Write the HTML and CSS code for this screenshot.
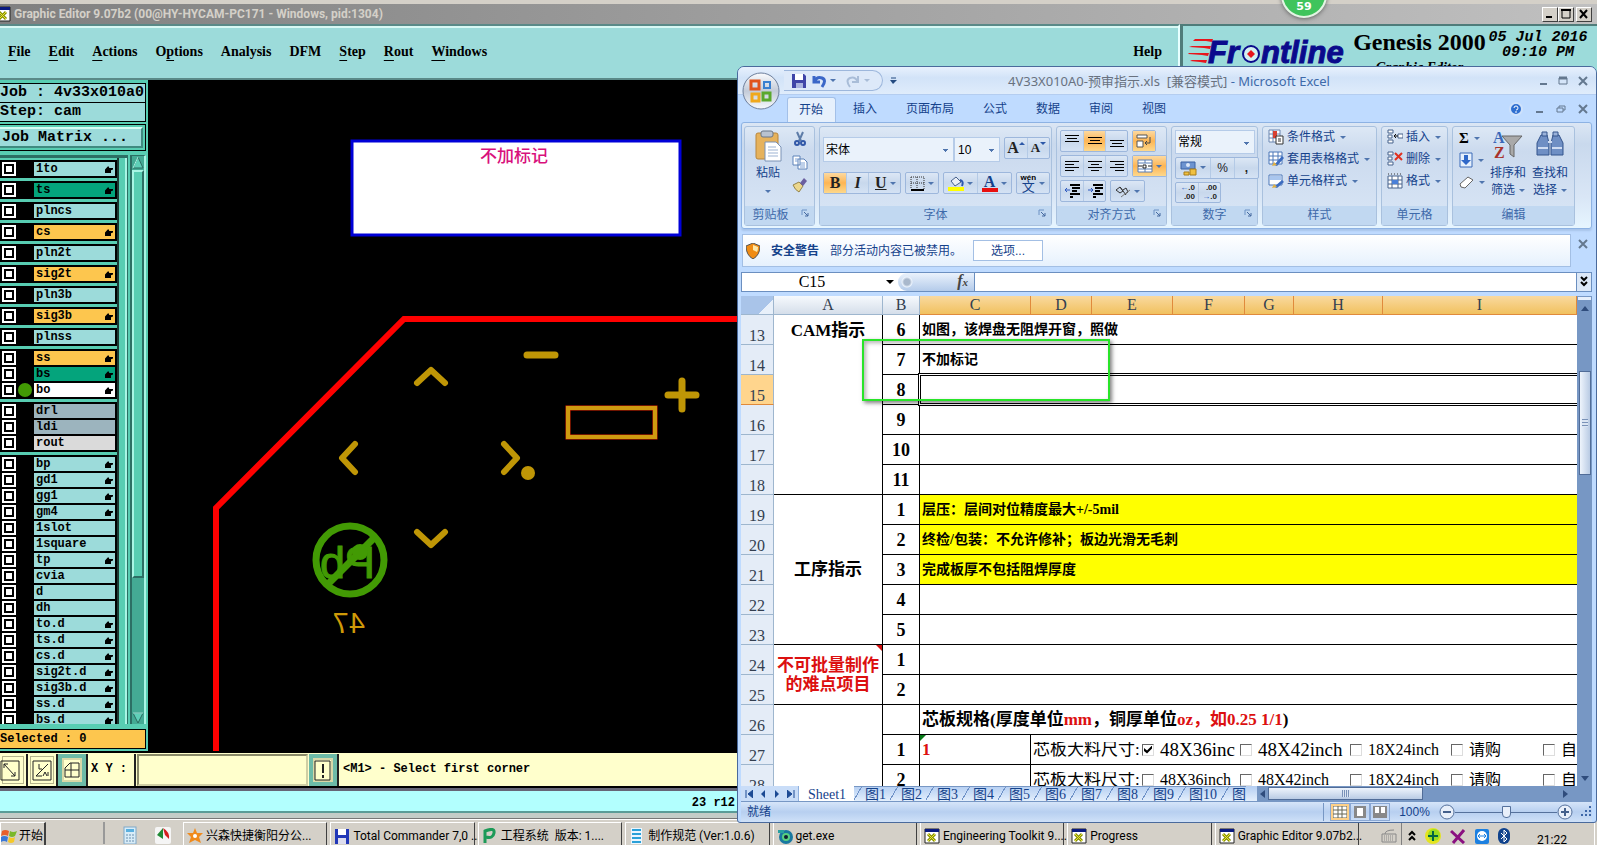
FILE: index.html
```html
<!DOCTYPE html>
<html lang="zh-CN">
<head>
  <meta charset="utf-8">
  <title>Graphic Editor</title>
  <link rel="stylesheet" href="styles.css">
</head>
<body>
<svg class="defs" aria-hidden="true">
  <symbol id="xwin" viewBox="0 0 16 16"><path d="M1 1h14v14H1z" fill="#fff" stroke="#222"/><path d="M1 1h14v3H1z" fill="#0a1a80"/><path d="M4 6l7 7M11 6l-7 7" stroke="#8a9000" stroke-width="3"/><path d="M4 6l7 7M11 6l-7 7" stroke="#e8e83c" stroke-width="1"/></symbol>
  <symbol id="launch" viewBox="0 0 8 8"><path d="M1 6V1h5" fill="none" stroke="#6d92c4"/><path d="M3 3l4 4M7 4v3H4" fill="none" stroke="#44699f"/></symbol>
</svg>
<div class="desktop">

  <div class="titlebar">
    <svg width="16" height="16"><use href="#xwin"/></svg>
    <span class="caption">Graphic Editor 9.07b2 (00@HY-HYCAM-PC171 - Windows, pid:1304)</span>
    <div class="winbtns">
      <button aria-label="Minimize"><svg width="12" height="10"><path d="M2 8h6" stroke="#000" stroke-width="2"/></svg></button>
      <button aria-label="Maximize"><svg width="12" height="10"><path d="M2 1v8h8V1z" fill="none" stroke="#000"/><path d="M1 1h10" stroke="#000" stroke-width="2"/></svg></button>
      <button class="close" aria-label="Close"><svg width="12" height="10"><path d="M2 1l7 8M9 1l-7 8" stroke="#000" stroke-width="2"/></svg></button>
    </div>
  </div>

  <div class="header">
    <div class="menubar">
      <a href="#"><u>F</u>ile</a>
      <a href="#"><u>E</u>dit</a>
      <a href="#"><u>A</u>ctions</a>
      <a href="#">O<u>p</u>tions</a>
      <a href="#">Analysis</a>
      <a href="#">DFM</a>
      <a href="#"><u>S</u>tep</a>
      <a href="#"><u>R</u>out</a>
      <a href="#"><u>W</u>indows</a>
      <a href="#" class="help">Help</a>
    </div>
    <div class="brand">
      <svg class="frontline" width="164" height="36">
        <path d="M8 3h18l-1 3-6-1-13 0zM5 10h19l-1 3-6-1-15-1zM2 17h20l-1 3-6-1-14-1zM5 24h15l-1 3-6-1-10-1z" fill="#e8141c"/>
        <g font-family="Liberation Sans, sans-serif" font-size="31" font-weight="bold" font-style="italic" fill="#0a0a8c" stroke="#0a0a8c"><text x="21" y="27">Fr</text><text x="74" y="27">ntline</text></g>
        <circle cx="64" cy="18" r="8" fill="#d4f0f0" stroke="#0a0a8c" stroke-width="2"/>
        <path d="M64 14l4 4-4 4-4-4z" fill="#e8141c"/>
      </svg>
      <div class="product">
        <div class="pname">Genesis 2000</div>
        <div class="psub">Graphic Editor</div>
      </div>
      <div class="clock">05 Jul 2016<br>09:10 PM</div>
    </div>
  </div>

  <div class="main">
    <div class="side">
      <div class="info">Job : 4v33x010a0</div>
      <div class="info">Step: cam</div>
      <div class="matrix"><button>Job Matrix ...</button></div>
      <div class="listbox">
        <div class="layers">
          <div class="grp"><label><input type="checkbox"><span class="name hand">1to</span></label></div>
          <div class="grp"><label><input type="checkbox"><span class="name green hand">ts</span></label></div>
          <div class="grp"><label><input type="checkbox"><span class="name">plncs</span></label></div>
          <div class="grp"><label><input type="checkbox"><span class="name orange hand">cs</span></label></div>
          <div class="grp"><label><input type="checkbox"><span class="name">pln2t</span></label></div>
          <div class="grp"><label><input type="checkbox"><span class="name orange hand">sig2t</span></label></div>
          <div class="grp"><label><input type="checkbox"><span class="name">pln3b</span></label></div>
          <div class="grp"><label><input type="checkbox"><span class="name orange hand">sig3b</span></label></div>
          <div class="grp"><label><input type="checkbox"><span class="name">plnss</span></label></div>
          <div class="grp">
            <label><input type="checkbox"><span class="name orange hand">ss</span></label>
            <label><input type="checkbox"><span class="name green hand">bs</span></label>
            <label class="active"><input type="checkbox"><span class="name white hand">bo</span></label>
          </div>
          <div class="grp">
            <label><input type="checkbox"><span class="name gray">drl</span></label>
            <label><input type="checkbox"><span class="name gray">ldi</span></label>
            <label><input type="checkbox"><span class="name silver">rout</span></label>
          </div>
          <div class="grp">
            <label><input type="checkbox"><span class="name hand">bp</span></label>
            <label><input type="checkbox"><span class="name hand">gd1</span></label>
            <label><input type="checkbox"><span class="name hand">gg1</span></label>
            <label><input type="checkbox"><span class="name hand">gm4</span></label>
            <label><input type="checkbox"><span class="name">1slot</span></label>
            <label><input type="checkbox"><span class="name">1square</span></label>
            <label><input type="checkbox"><span class="name hand">tp</span></label>
            <label><input type="checkbox"><span class="name">cvia</span></label>
            <label><input type="checkbox"><span class="name">d</span></label>
            <label><input type="checkbox"><span class="name">dh</span></label>
            <label><input type="checkbox"><span class="name hand">to.d</span></label>
            <label><input type="checkbox"><span class="name hand">ts.d</span></label>
            <label><input type="checkbox"><span class="name hand">cs.d</span></label>
            <label><input type="checkbox"><span class="name hand">sig2t.d</span></label>
            <label><input type="checkbox"><span class="name hand">sig3b.d</span></label>
            <label><input type="checkbox"><span class="name hand">ss.d</span></label>
            <label><input type="checkbox"><span class="name hand">bs.d</span></label>
          </div>
        </div>
        <div class="vbar">
          <svg width="12" height="14"><path d="M6 1L1 12h10z" fill="#5fd0b8" stroke="#2b6b60"/><path d="M6 1L1 12" stroke="#a8f5e4"/></svg>
          <div class="vthumb"></div>
          <div class="vtrack"></div>
          <svg width="12" height="12"><path d="M1 1h10L6 11z" fill="#5fd0b8" stroke="#2b6b60"/><path d="M1 1h10" stroke="#a8f5e4"/></svg>
        </div>
      </div>
      <div class="selected">Selected : 0</div>
    </div>
    <svg class="canvas">
      <rect x="204" y="61" width="328" height="94" fill="#fff" stroke="#0000d8" stroke-width="3"/>
      <text x="366" y="82" text-anchor="middle" font-size="17" fill="#d8107c">不加标记</text>
      <path d="M4000 239H256L68 428V671" fill="none" stroke="#f00" stroke-width="6"/>
      <g fill="none" stroke="#bf9606" stroke-width="6" stroke-linecap="round" stroke-linejoin="round">
        <path d="M269 303l14-13 14 13M269 452l14 13 14-13M207 364l-13 14 13 14M356 364l13 14-13 14"/>
        <path d="M379 275h28M520 315h28M534 301v28" stroke-width="7"/>
      </g>
      <rect x="420" y="328" width="87" height="29" fill="none" stroke="#e02800" stroke-width="5"/>
      <rect x="420" y="328" width="87" height="29" fill="none" stroke="#cf9a10" stroke-width="4"/>
      <circle cx="380" cy="393" r="7" fill="#bf9606"/>
      <g stroke="#429a04" fill="none" stroke-width="7">
        <circle cx="202" cy="480" r="34"/>
        <path d="M227 457l-48 48"/>
      </g>
      <circle cx="212" cy="472" r="8" fill="#429a04"/>
      <text class="mirror" x="-227" y="498" font-size="45" fill="#429a04" stroke="#429a04">Pb</text>
      <text class="mirror four7" x="-217" y="553" font-size="29" fill="#cf9a08">47</text>
    </svg>
  </div>

  <div class="toolbar">
    <button class="tool" aria-label="Zoom"><svg width="20" height="21"><path d="M1 1h18v19H1zM4 4l11 12M4 8V4h4M11 16h4v-4" fill="none" stroke="#222"/></svg></button>
    <button class="tool" aria-label="Angle"><svg width="20" height="21"><path d="M1 1h18v19H1zM4 16L16 4M4 16h6M7 4v5h3M11 16l2-4 2 4M16 12v4" fill="none" stroke="#222"/></svg></button>
    <button class="tool on" aria-label="Grid"><svg width="20" height="21"><path d="M3 8l5-5h9v14H3zM3 10h14M9 3v14" fill="none" stroke="#222"/></svg></button>
    <label class="xy" for="xy">X Y :</label>
    <input type="text" id="xy">
    <button class="tool on" aria-label="Alert"><svg width="20" height="21"><path d="M2 1h15v19H2z" fill="none" stroke="#222"/><path d="M10 4v9M10 15v3" stroke="#222" stroke-width="2"/></svg></button>
    <span class="msg">&lt;M1&gt; - Select first corner</span>
  </div>
  <div class="statusline"><span>23 r12</span></div>

  <div class="taskbar">
    <button class="start"><svg width="16" height="16"><path d="M1 3q3-2 7 0l-1 5q-3-2-7 0z" fill="#e8602c"/><path d="M9 3q3 2 7 0l-2 5q-3 2-6 0z" fill="#7ab829"/><path d="M0 9q3-2 7 0l-1 5q-3-2-6 0z" fill="#3a78d8"/><path d="M8 9q3 2 6 0l-1 5q-3 2-6 0z" fill="#f5c828"/></svg>开始</button>
    <div class="quick">
      <svg width="14" height="18"><rect x="1" y="1" width="12" height="17" fill="#d8ecf8" stroke="#7fa8c8"/><path d="M3 3h8v3H3z" fill="#5ab0e0"/><path d="M3 9h8M3 12h8M3 15h8" stroke="#6a90b0" stroke-dasharray="2 1"/></svg>
      <svg width="16" height="18"><rect y="1" width="16" height="17" rx="2" fill="#f5f5f5"/><path d="M2 9l6-7v11z" fill="#1f8a34"/><path d="M8 2q7 4 6 11l-4-4z" fill="#d42020"/></svg>
    </div>
    <div class="tasks">
      <button><svg width="16" height="16"><path d="M8 0l2 5 6 0-4 4 2 6-6-3-6 3 2-6-4-4 6 0z" fill="#f08a1c"/><circle cx="8" cy="8" r="2" fill="#fff"/></svg>兴森快捷衡阳分公...</button>
      <button><svg width="16" height="16"><path d="M1 1h14v15H1z" fill="#2238b8"/><path d="M4 1h8v6H4z" fill="#fff"/><path d="M4 10h8v6H4z" fill="#dde"/></svg>Total Commander 7,0 ...</button>
      <button><svg width="16" height="16"><path d="M3 15V3q10-4 9 2t-8 4" fill="none" stroke="#1c9a58" stroke-width="3"/></svg>工程系统&nbsp; 版本: 1....</button>
      <button><svg width="16" height="16"><path d="M2 0h11v16H2z" fill="#eaf6ff"/><path d="M3 2h9M3 6h9M3 10h9M3 14h9" stroke="#2aa0d8" stroke-width="2"/></svg>制作规范 (Ver:1.0.6)</button>
      <button><svg width="16" height="16"><circle cx="9" cy="9" r="7" fill="#1878a0"/><circle cx="9" cy="9" r="4" fill="#58d080"/><circle cx="9" cy="9" r="2" fill="#123"/><path d="M1 2h6v3H1z" fill="#28a0a0"/></svg>get.exe</button>
      <button><svg width="16" height="16"><use href="#xwin"/></svg>Engineering Toolkit 9....</button>
      <button><svg width="16" height="16"><use href="#xwin"/></svg>Progress</button>
      <button><svg width="16" height="16"><use href="#xwin"/></svg>Graphic Editor 9.07b2...</button>
    </div>
    <svg class="kbd" width="16" height="16"><path d="M1 6h14v8H1zM4 6q0-4 9-4" fill="none" stroke="#888"/><path d="M3 8h10M3 10h10M3 12h10" stroke="#888" stroke-dasharray="1 1"/></svg>
    <div class="tray">
      <svg width="8" height="12"><path d="M1 5l3-3 3 3M1 10l3-3 3 3" fill="none" stroke="#000" stroke-width="2"/></svg>
      <svg width="16" height="16"><circle cx="8" cy="8" r="8" fill="#e4e420"/><circle cx="9" cy="7" r="6" fill="#9ade20"/><path d="M8 3v10M3 8h10" stroke="#064" stroke-width="2"/></svg>
      <svg width="16" height="16"><path d="M1 3l13 12M14 2L3 15" stroke="#8a1080" stroke-width="3"/></svg>
      <svg width="14" height="16"><rect y="1" width="14" height="15" rx="2" fill="#1c80e0"/><circle cx="7" cy="8" r="5" fill="#fff"/><path d="M3 8h8M5 6L3 8l2 2M9 6l2 2-2 2" stroke="#1c80e0" fill="none"/></svg>
      <svg width="12" height="16"><rect width="12" height="16" rx="6" fill="#10428c"/><path d="M3 5l6 6-3 3V2l3 3-6 6" fill="none" stroke="#fff"/></svg>
      <span class="time">21:22</span>
    </div>
  </div>

  <div class="excel">
    <button class="office" aria-label="Office"><svg width="38" height="38"><defs><linearGradient id="orb" x2="0" y2="1"><stop offset="0" stop-color="#fbfcfe"/><stop offset=".5" stop-color="#c3cbd8"/><stop offset="1" stop-color="#f6f9fd"/></linearGradient></defs><circle cx="19" cy="19" r="18" fill="url(#orb)" stroke="#6d7f9c"/><g fill="none" stroke-width="3"><path d="M17 17H9V9h8z" stroke="#e0541c"/><path d="M22 10h6v6h-6z" stroke="#3a80d0" stroke-width="2"/><path d="M10 22h7v7h-7z" stroke="#f0a81c"/><path d="M21 21h7v7h-7z" stroke="#5aa82c"/></g></svg></button>
    <div class="xtitle">
      <div class="qat">
        <button aria-label="Save"><svg width="14" height="14"><path d="M0 0h12l2 2v12H0z" fill="#3f45a8"/><path d="M3 0h8v6H3z" fill="#fff"/><path d="M4 9h7v5H4z" fill="#aab4e0"/></svg></button>
        <button class="dd" aria-label="Undo"><svg width="14" height="14"><path d="M2 2v6h6M2 8q3-6 8-4t0 9" fill="none" stroke="#3b67c8" stroke-width="3"/></svg></button>
        <button class="dd off" aria-label="Redo"><svg width="14" height="14"><path d="M12 2v6H6M12 8q-3-6-8-4t0 9" fill="none" stroke="#a9bdd8" stroke-width="2"/></svg></button>
      </div>
      <svg class="more" width="7" height="8"><path d="M1 1h5" stroke="#234a80"/><path d="M0 3h7L3 7z" fill="#234a80"/></svg>
      <div class="xcaption"><span>4V33X010A0-预审指示.xls&nbsp; [兼容模式]</span> - Microsoft Excel</div>
      <div class="xbtns">
        <button aria-label="Minimize"><svg width="12" height="12"><path d="M3 9h7" stroke="#64788f" stroke-width="2"/></svg></button>
        <button aria-label="Maximize"><svg width="12" height="12"><path d="M2 3h8v6H2z" fill="none" stroke="#64788f"/><path d="M2 3h8" stroke="#64788f" stroke-width="3"/></svg></button>
        <button aria-label="Close"><svg width="12" height="12"><path d="M2 2l8 8M10 2l-8 8" stroke="#64788f" stroke-width="2"/></svg></button>
      </div>
    </div>
    <div class="xtabs">
      <a href="#" class="cur">开始</a><a href="#">插入</a><a href="#">页面布局</a><a href="#">公式</a><a href="#">数据</a><a href="#">审阅</a><a href="#">视图</a>
      <div class="xbtns">
        <button aria-label="Help"><svg width="14" height="14"><circle cx="7" cy="7" r="6" fill="#2f6fd0" stroke="#cfe2fb" stroke-width="2"/><path d="M5 6q0-2 2-2t2 2-2 2M7 9v2" fill="none" stroke="#fff"/></svg></button>
        <button aria-label="Minimize workbook"><svg width="12" height="12"><path d="M3 9h7" stroke="#64788f" stroke-width="2"/></svg></button>
        <button aria-label="Restore workbook"><svg width="12" height="12"><path d="M2 5h6v4H2zM4 5V3h6v4H8" fill="none" stroke="#64788f"/></svg></button>
        <button aria-label="Close workbook"><svg width="12" height="12"><path d="M2 2l8 8M10 2l-8 8" stroke="#64788f" stroke-width="2"/></svg></button>
      </div>
    </div>

    <div class="ribbon">
      <div class="rgroup clip">
        <div class="rbody">
          <button class="big paste"><svg width="28" height="32"><rect x="2" y="3" width="22" height="26" rx="2" fill="#e6b25c" stroke="#b8863c"/><rect x="7" y="1" width="12" height="6" rx="2" fill="#b9c2cf" stroke="#6a7687"/><path d="M11 12h11l5 5v14H11z" fill="#fff" stroke="#7a92b5"/><path d="M14 17h8M14 20h10M14 23h10M14 26h10" stroke="#9db3d2"/></svg><span>粘贴</span><i></i></button>
          <div class="col">
            <button aria-label="Cut"><svg width="16" height="16"><path d="M5 1l4 9M11 1L7 10" stroke="#5d7ca8" stroke-width="2"/><circle cx="5" cy="12" r="2" fill="none" stroke="#3258a8" stroke-width="2"/><circle cx="11" cy="12" r="2" fill="none" stroke="#3258a8" stroke-width="2"/></svg></button>
            <button aria-label="Copy"><svg width="16" height="16"><path d="M1 2h7v9H1zM6 5h6l3 3v7H6z" fill="#fff" stroke="#5d82b8"/><path d="M8 9h5M8 11h5M8 13h5M3 5h3M3 7h3" stroke="#7ea2d4"/></svg></button>
            <button aria-label="Format painter"><svg width="16" height="16"><path d="M1 8l6-3 4 4-4 6q-4-2-6-7z" fill="#ecd78c" stroke="#94834a"/><path d="M8 6l4-5 3 3-4 5z" fill="#6b5fa0"/></svg></button>
          </div>
        </div>
        <div class="rname">剪贴板<svg width="8" height="8"><use href="#launch"/></svg></div>
      </div>

      <div class="rgroup font">
        <div class="rbody stack">
          <div class="line">
            <div class="pair"><select class="fname" aria-label="字体"><option>宋体</option></select><select class="fsize" aria-label="字号"><option>10</option></select></div>
            <div class="bset"><button class="serif up">A</button><button class="serif small dn">A</button></div>
          </div>
          <div class="line">
            <div class="bset"><button class="serif on">B</button><button class="serif it">I</button><button class="serif dd"><u>U</u></button></div>
            <div class="bset"><button class="dd" aria-label="Borders"><svg width="15" height="15"><path d="M1 1h13v12M1 1v12M7 1v12M1 7h13" fill="none" stroke="#333" stroke-dasharray="1 1"/><path d="M1 14h13" stroke="#000" stroke-width="2"/></svg></button></div>
            <div class="bset"><button class="dd" aria-label="Fill color"><svg width="16" height="16"><path d="M3 6l5-4 5 5-6 4z" fill="#e9eef6" stroke="#47618c"/><path d="M12 5q4 1 2 6" fill="none" stroke="#2c58b0" stroke-width="2"/><path d="M0 12h16v4H0z" fill="#ff0"/></svg></button><button class="dd acolor"><span>A</span></button></div>
            <div class="bset"><button class="dd wen"><span><small>wén</small>文</span></button></div>
          </div>
        </div>
        <div class="rname">字体<svg width="8" height="8"><use href="#launch"/></svg></div>
      </div>

      <div class="rgroup align">
        <div class="rbody stack">
          <div class="line">
            <div class="bset"><button aria-label="Top"><svg width="14" height="14"><path d="M0 1h14v1H0zM2 4h10v1H2zM0 7h14v1H0z"/></svg></button><button class="on" aria-label="Middle"><svg width="14" height="14"><path d="M0 3h14v1H0zM2 6h10v1H2zM0 9h14v1H0z"/></svg></button><button aria-label="Bottom"><svg width="14" height="14"><path d="M0 6h14v1H0zM2 9h10v1H2zM0 12h14v1H0z"/></svg></button></div>
            <div class="bset"><button class="on" aria-label="Wrap"><svg width="16" height="16"><path d="M1 2h10v3H1zM1 8h6v6H1z" fill="#fff" stroke="#555"/><path d="M14 4v6H9M11 8l-2 2 2 2" fill="none" stroke="#444"/></svg></button></div>
          </div>
          <div class="line">
            <div class="bset"><button aria-label="Left"><svg width="14" height="12"><path d="M0 1h14v1H0zM0 4h9v1H0zM0 7h14v1H0zM0 10h9v1H0z"/></svg></button><button aria-label="Center"><svg width="14" height="12"><path d="M0 1h14v1H0zM3 4h8v1H3zM0 7h14v1H0zM3 10h8v1H3z"/></svg></button><button aria-label="Right"><svg width="14" height="12"><path d="M0 1h14v1H0zM5 4h9v1H5zM0 7h14v1H0zM5 10h9v1H5z"/></svg></button></div>
            <div class="bset"><button class="on dd" aria-label="Merge"><svg width="16" height="14"><path d="M1 1h14v12H1zM1 4h14M1 10h14M8 1v3M8 10v3" fill="#fff" stroke="#5b7fb5"/><path d="M5 7H1M11 7h4" stroke="#222"/><path d="M6 6h3v3H6z" fill="none" stroke="#222"/></svg></button></div>
          </div>
          <div class="line">
            <div class="bset"><button aria-label="Outdent"><svg width="16" height="14"><path d="M6 1h10M8 4h8M8 7h5M6 10h10M6 13h3" stroke="#000" stroke-width="2"/><path d="M6 6H1M3 4L1 6l2 2" stroke="#2c58c0" fill="none"/></svg></button><button aria-label="Indent"><svg width="16" height="14"><path d="M6 1h10M8 4h8M8 7h5M6 10h10M6 13h3" stroke="#000" stroke-width="2"/><path d="M1 6h5M4 4l2 2-2 2" stroke="#2c58c0" fill="none"/></svg></button></div>
            <div class="bset"><button class="dd" aria-label="Orientation"><svg width="16" height="14"><path d="M1 6l4-3 3 4-3 2zM5 3l6 8M8 6l3-2 2 4-3 2" fill="none" stroke="#333"/><path d="M6 13l9-7" stroke="#777"/></svg></button></div>
          </div>
        </div>
        <div class="rname">对齐方式<svg width="8" height="8"><use href="#launch"/></svg></div>
      </div>

      <div class="rgroup number">
        <div class="rbody stack">
          <select class="nfmt" aria-label="数字格式"><option>常规</option></select>
          <div class="bset"><button class="dd" aria-label="Currency"><svg width="17" height="16"><path d="M1 2h14v7H1z" fill="#6c93cf" stroke="#3a62a4"/><circle cx="8" cy="5" r="2" fill="#dce8f8"/><path d="M10 9h6v6h-6zM4 12h5v3H4z" fill="#f0c040" stroke="#a87c18"/></svg></button><button class="pct">%</button><button class="pct"><b>,</b></button></div>
          <div class="bset dec"><button><span>←</span>.0<br>.00</button><button>.00<br><span>→</span>.0</button></div>
        </div>
        <div class="rname">数字<svg width="8" height="8"><use href="#launch"/></svg></div>
      </div>

      <div class="rgroup styles">
        <div class="rbody list">
          <button class="dd"><svg width="16" height="16"><path d="M1 1h11v12H1zM1 5h11M1 9h11M5 1v12" fill="#fff" stroke="#6a86b0"/><path d="M5 2h4v7H5z" fill="#d84030"/><path d="M8 7h7v8H8z" fill="#fff" stroke="#333"/><path d="M10 10h3M10 12h3" stroke="#333"/></svg>条件格式</button>
          <button class="dd"><svg width="16" height="16"><path d="M1 1h13v12H1zM1 5h13M1 9h13M5 1v12M10 1v12" fill="#fff" stroke="#4a76b8"/><path d="M6 14l8-9 2 2-7 8z" fill="#3c6cc0"/><path d="M4 15l2-4 3 3z" fill="#e0b040"/></svg>套用表格格式</button>
          <button class="dd"><svg width="16" height="16"><path d="M1 2h13v10H1z" fill="#fff" stroke="#4a76b8"/><path d="M2 3h11v4H2z" fill="#a9c6ee"/><path d="M6 14l8-7 2 2-7 6z" fill="#3c6cc0"/><path d="M4 15l2-4 3 3z" fill="#e0b040"/></svg>单元格样式</button>
        </div>
        <div class="rname">样式</div>
      </div>

      <div class="rgroup cells">
        <div class="rbody list">
          <button class="dd"><svg width="16" height="16"><path d="M1 1h5v3H1zM1 11h5v3H1zM1 6h4v3H1zM11 5h5v4h-5z" fill="#fff" stroke="#46628c"/><path d="M11 7H7M9 5L7 7l2 2" stroke="#111" fill="none"/></svg>插入</button>
          <button class="dd"><svg width="16" height="16"><path d="M1 1h5v3H1zM1 11h5v3H1zM1 6h4v3H1z" fill="#fff" stroke="#46628c"/><path d="M8 2l7 7M15 2L8 9" stroke="#e03020" stroke-width="2"/></svg>删除</button>
          <button class="dd"><svg width="16" height="16"><path d="M1 3h14v12H1zM1 7h14M1 11h14M5 3v12M11 3v12" fill="#fff" stroke="#46628c"/><path d="M5 7h6v4H5z" fill="#4a80d8"/><path d="M1 1h14" stroke="#333" stroke-dasharray="1 2"/></svg>格式</button>
        </div>
        <div class="rname">单元格</div>
      </div>

      <div class="rgroup edit">
        <div class="rbody">
          <div class="list">
            <button class="dd sigma">Σ</button>
            <button class="dd" aria-label="Fill"><svg width="14" height="16"><path d="M1 1h12v14H1z" fill="#e6f0fc" stroke="#3a6ab8"/><path d="M5 3h4v5h3l-5 5-5-5h3z" fill="#2f68c8"/></svg></button>
            <button class="dd" aria-label="Clear"><svg width="15" height="14"><path d="M1 9l8-7 5 3-8 8-4-1z" fill="#fff" stroke="#666"/></svg></button>
          </div>
          <button class="big"><svg width="30" height="30"><text x="0" y="13" font-family="Liberation Serif, serif" font-size="16" font-weight="bold" fill="#3a68b8">A</text><text x="1" y="28" font-family="Liberation Serif, serif" font-size="16" font-weight="bold" fill="#a8322c">Z</text><path d="M9 6h20l-8 9v12l-4-3v-9z" fill="#a9a9a9" stroke="#666"/></svg><span>排序和<br>筛选<i></i></span></button>
          <button class="big"><svg width="30" height="30"><path d="M6 5h6l2 8v12H2V13zM18 5h6l4 8v12H16V13z" fill="#6f8fc4" stroke="#34548c"/><path d="M7 2h5v4H7zM18 2h5v4h-5z" fill="#9ab2da" stroke="#34548c"/><path d="M3 18h10M17 18h10M13 12h4" stroke="#cfdcf2" stroke-width="2"/></svg><span>查找和<br>选择<i></i></span></button>
        </div>
        <div class="rname">编辑</div>
      </div>
    </div>

    <div class="security">
      <div class="secbox">
        <svg width="14" height="16"><path d="M7 0l7 3q0 9-7 13Q0 12 0 3z" fill="#f08c14" stroke="#555"/><path d="M7 2l5 2q0 3-1 5L7 7z" fill="#fde8a8"/></svg>
        <b>安全警告</b>
        <span>部分活动内容已被禁用。</span>
        <button>选项...</button>
      </div>
      <button class="secx" aria-label="Close"><svg width="12" height="12"><path d="M2 2l8 8M10 2l-8 8" stroke="#64788f" stroke-width="2"/></svg></button>
    </div>

    <div class="fbar">
      <div class="namebox"><input type="text" value="C15" aria-label="Name box"><i></i></div>
      <div class="fx"><em>f</em><small>x</small></div>
      <input class="formula" type="text" aria-label="Formula">
      <button aria-label="Expand"><svg width="9" height="12"><path d="M1 1l3 3 3-3M1 6l3 3 3-3" fill="none" stroke="#000" stroke-width="2"/></svg></button>
    </div>

    <div class="book">
      <div class="sheet">
        <table>
          <colgroup><col class="c0"><col class="ca"><col class="cb"><col class="cc"><col class="cd"><col class="ce"><col class="cf"><col class="cg"><col class="ch"><col></colgroup>
          <thead>
            <tr><th class="corner"></th><th>A</th><th>B</th><th class="hot">C</th><th class="hot">D</th><th class="hot">E</th><th class="hot">F</th><th class="hot">G</th><th class="hot">H</th><th class="hot">I</th></tr>
          </thead>
          <tbody>
            <tr><th>13</th><td class="cat top" rowspan="6">CAM指示</td><td class="n">6</td><td colspan="7">如图，该焊盘无阻焊开窗，照做</td></tr>
            <tr><th>14</th><td class="n">7</td><td colspan="7">不加标记</td></tr>
            <tr><th class="hot">15</th><td class="n">8</td><td colspan="7" class="picked"></td></tr>
            <tr><th>16</th><td class="n">9</td><td colspan="7"></td></tr>
            <tr><th>17</th><td class="n">10</td><td colspan="7"></td></tr>
            <tr><th>18</th><td class="n">11</td><td colspan="7"></td></tr>
            <tr><th>19</th><td class="cat" rowspan="5">工序指示</td><td class="n">1</td><td colspan="7" class="y">层压：层间对位精度最大+/-5mil</td></tr>
            <tr><th>20</th><td class="n">2</td><td colspan="7" class="y">终检/包装：不允许修补；板边光滑无毛刺</td></tr>
            <tr><th>21</th><td class="n">3</td><td colspan="7" class="y">完成板厚不包括阻焊厚度</td></tr>
            <tr><th>22</th><td class="n">4</td><td colspan="7"></td></tr>
            <tr><th>23</th><td class="n">5</td><td colspan="7"></td></tr>
            <tr><th>24</th><td class="cat red note" rowspan="2">不可批量制作<br>的难点项目</td><td class="n">1</td><td colspan="7"></td></tr>
            <tr><th>25</th><td class="n">2</td><td colspan="7"></td></tr>
            <tr><th>26</th><td class="cat" rowspan="3"></td><td class="n"></td><td colspan="7" class="big17">芯板规格(厚度单位<span class="red">mm</span>，铜厚单位<span class="red">oz，如0.25 1/1</span>)</td></tr>
            <tr><th>27</th><td class="n">1</td><td class="big17 red flag">1</td><td colspan="6" class="opts"><div><span>芯板大料尺寸:</span><label class="lg"><input type="checkbox" checked>48X36inc</label><label class="lg"><input type="checkbox">48X42inch</label><label><input type="checkbox">18X24inch</label><label><input type="checkbox">请购</label><label><input type="checkbox">自购</label></div></td></tr>
            <tr><th>28</th><td class="n">2</td><td></td><td colspan="6" class="opts"><div><span>芯板大料尺寸:</span><label><input type="checkbox">48X36inch</label><label><input type="checkbox">48X42inch</label><label><input type="checkbox">18X24inch</label><label><input type="checkbox">请购</label><label><input type="checkbox">自购</label></div></td></tr>
          </tbody>
        </table>
        <div class="markbox"></div>
      </div>
      <div class="xvbar"><b></b><i class="north"></i><div></div><i></i></div>
    </div>

    <div class="tabsrow">
      <div class="nav"><button aria-label="First"><svg width="8" height="8"><path d="M1 0v8M8 0L3 4l5 4z" fill="#1c4a94" stroke="#1c4a94"/></svg></button><button aria-label="Previous"><svg width="8" height="8"><path d="M6 0L2 4l4 4z" fill="#1c4a94"/></svg></button><button aria-label="Next"><svg width="8" height="8"><path d="M2 0l4 4-4 4z" fill="#1c4a94"/></svg></button><button aria-label="Last"><svg width="8" height="8"><path d="M7 0v8M0 0l5 4-5 4z" fill="#1c4a94" stroke="#1c4a94"/></svg></button></div>
      <div class="stabs"><a href="#" class="cur">Sheet1</a><a href="#">图1</a><a href="#">图2</a><a href="#">图3</a><a href="#">图4</a><a href="#">图5</a><a href="#">图6</a><a href="#">图7</a><a href="#">图8</a><a href="#">图9</a><a href="#">图10</a><a href="#">图</a></div>
      <div class="hbar"><i class="l"></i><div></div><i class="r"></i></div>
    </div>

    <div class="xstatus">
      <span>就绪</span>
      <div class="views">
        <button class="on" aria-label="Normal"><svg width="14" height="12"><path d="M0 0h14v12H0zM0 4h14M0 8h14M5 0v12M9 0v12" fill="#fff" stroke="#665"/></svg></button><button aria-label="Layout"><svg width="14" height="12"><path d="M1 0h12v12H1z" fill="#888"/><path d="M4 2h6v8H4z" fill="#fff"/></svg></button><button aria-label="Breaks"><svg width="14" height="12"><path d="M0 0h14v12H0z" fill="#888"/><path d="M2 1h4v6H2zM8 1h4v6H8z" fill="#fff"/></svg></button>
      </div>
      <span class="zoom">100%</span>
      <button aria-label="Zoom out"><svg width="16" height="16"><circle cx="8" cy="8" r="7" fill="#e8effa" stroke="#55719c"/><path d="M4 8h8" stroke="#44608c" stroke-width="2"/></svg></button>
      <input type="range" aria-label="Zoom" value="50">
      <button aria-label="Zoom in"><svg width="16" height="16"><circle cx="8" cy="8" r="7" fill="#e8effa" stroke="#55719c"/><path d="M4 8h8M8 4v8" stroke="#44608c" stroke-width="2"/></svg></button>
      <svg class="grip" width="12" height="12"><path d="M9 1h2M9 5h2M5 5h2M9 9h2M5 9h2M1 9h2" stroke="#3c66a8" stroke-width="2"/></svg>
    </div>
  </div>

  <div class="badge">59</div>
</div>
</body>
</html>
```
FILE: styles.css
```css
*{
  box-sizing:border-box;
}
body{
  margin:0;
  font-family:"Liberation Sans","Noto Sans CJK SC",sans-serif;
  font-size:12px;
  line-height:16px;
}
button,input,select{
  margin:0;
  padding:0;
  border:0;
  border-radius:0;
  background:none;
  font:inherit;
  color:inherit;
  appearance:none;
}
a{
  color:inherit;
  text-decoration:none;
}
svg{
  display:block;
  flex:none;
}
.defs{
  position:absolute;
  width:0;
  height:0;
}
.desktop{
  position:relative;
  display:flex;
  flex-direction:column;
  height:100vh;
  overflow:hidden;
  background:#d4d0c8;
}

/* editor window */
.titlebar{
  display:flex;
  align-items:center;
  height:20px;
  margin-top:4px;
  padding-right:5px;
  background:linear-gradient(90deg,#808080,#c0c0c0);
}
.titlebar>svg{
  margin-left:-5px;
}
.caption{
  flex:1;
  margin-left:3px;
  font:bold 12px/16px Roboto,sans-serif;
  color:#d4d0c8;
}
.winbtns{
  display:flex;
}
.winbtns button{
  width:16px;
  height:15px;
  padding:1px;
  background:#d4d0c8;
  border:1px solid;
  border-color:#fff #404040 #404040 #fff;
}
.winbtns .close{
  margin-left:2px;
}
.header{
  display:flex;
  height:56px;
  background:#9cdbda;
}
.menubar{
  flex:1;
  display:flex;
  align-items:center;
  gap:18px;
  padding:0 16px 0 8px;
  border-top:2px solid #5a8a88;
  border-bottom:2px solid #5a8a88;
  border-right:2px solid #e8ffff;
  box-shadow:inset 0 2px #d8f8f4,0 2px #d8f8f4;
  font:bold 14px/20px "Liberation Serif",serif;
}
.menubar u{
  text-underline-offset:4px;
}
.menubar .help{
  margin-left:auto;
}
.brand{
  display:flex;
  width:417px;
  padding:4px 9px 0 4px;
  border:solid #4f7c7a;
  border-width:2px 0 0 3px;
}
.frontline{
  margin-top:6px;
}
.product{
  flex:1;
  text-align:center;
  white-space:nowrap;
}
.pname{
  font:bold 24px/24px "Liberation Serif",serif;
}
.psub{
  margin-top:6px;
  font:italic bold 14px/16px "Liberation Serif",serif;
}
.clock{
  width:100px;
  font:italic bold 15px/15px "Liberation Mono",monospace;
  text-align:center;
  white-space:nowrap;
}
.main{
  flex:1;
  min-height:0;
  display:flex;
  background:#000;
}
.side{
  display:flex;
  flex-direction:column;
  width:148px;
  padding:3px 2px 2px 0;
  background:#58cdb2;
  font-family:"Liberation Mono",monospace;
  font-weight:bold;
}
.info{
  height:20px;
  margin-bottom:-1px;
  background:#9cdbda;
  border:solid #000;
  border-width:1px 1px 1px 0;
  font-size:15px;
  line-height:18px;
}
.matrix{
  margin-top:3px;
  height:27px;
  padding:2px 2px 2px 0;
  border:solid #000;
  border-width:1px 1px 1px 0;
}
.matrix button{
  width:100%;
  height:21px;
  padding-left:2px;
  background:#9cdbda;
  border:2px solid;
  border-color:#d8fcf4 #3f8a80 #3f8a80 #d8fcf4;
  border-left:0;
  font-size:15px;
  line-height:16px;
  text-align:left;
}
.listbox{
  flex:1;
  min-height:0;
  display:flex;
  justify-content:space-between;
  margin-top:4px;
}
.layers{
  width:128px;
  padding-top:2px;
  overflow:hidden;
  border-top:3px solid #2c6f64;
  border-right:1px solid #2c6f64;
  box-shadow:inset -2px 0 #a8f5e4,inset -8px 0 #58cdb2,inset -10px 0 #1b3a34;
}
.grp{
  width:117px;
  margin-bottom:3px;
  padding:2px 2px 0;
  background:#000;
}
.grp label{
  position:relative;
  display:flex;
  justify-content:space-between;
  padding-bottom:2px;
}
.grp input{
  width:14px;
  height:14px;
  background:#fff;
  border:2px solid #fff;
  box-shadow:inset 0 0 0 2px #000;
}
.name{
  position:relative;
  width:81px;
  height:14px;
  padding-left:2px;
  background:#9cdbda;
  font-size:12px;
  line-height:14px;
}
.green{background:#04a47c}
.orange{background:#fdc64e}
.white{background:#fff}
.gray{background:#9cb4be}
.silver{background:#dadada}
.hand::after{
  content:"";
  position:absolute;
  right:2px;
  top:4px;
  width:8px;
  height:7px;
  background:#000;
  clip-path:polygon(40% 0,55% 30%,100% 30%,100% 50%,75% 60%,75% 100%,0 100%,0 50%);
}
.active::before{
  content:"";
  position:absolute;
  left:16px;
  top:0;
  width:14px;
  height:14px;
  border-radius:7px;
  background:#429a04;
}
.vbar{
  display:flex;
  flex-direction:column;
  width:16px;
  background:#44aa94;
  border:solid;
  border-width:1px 2px 0;
  border-color:#2c6f64 #a8f5e4 #2c6f64 #2c6f64;
}
.vthumb{
  flex:3;
  background:#58cdb2;
  border:2px solid;
  border-color:#a8f5e4 #2c6f64 #2c6f64 #a8f5e4;
}
.vtrack{
  flex:1;
}
.selected{
  height:20px;
  margin-top:5px;
  background:#fdc64e;
  border:solid #000;
  border-width:1px 1px 1px 0;
  font-size:12px;
  line-height:18px;
}
.canvas{
  flex:1;
  width:100%;
  min-width:0;
  height:100%;
  font-family:"Noto Sans CJK SC",sans-serif;
  font-weight:500;
}
.mirror{
  transform:scaleX(-1);
  font-family:"Liberation Sans",sans-serif;
  font-weight:normal;
}
.toolbar{
  display:flex;
  height:37px;
  padding-top:1px;
  background:#ffffcc;
  border-top:2px solid #000;
  border-bottom:2px solid #000;
  font:bold 12px/30px "Liberation Mono",monospace;
}
.tool{
  width:30px;
  display:flex;
  align-items:center;
  justify-content:center;
  border-right:2px solid #222;
  box-shadow:inset 0 0 0 2px #ffffcc,inset 0 0 0 3px #b5b48c;
}
.tool:first-child{
  width:28px;
  justify-content:flex-start;
}
.tool.on{
  box-shadow:inset 0 0 0 4px #6dbba8,inset 0 0 0 6px #d8d8a8;
}
.xy{
  width:48px;
  padding-left:3px;
  border-right:2px solid #222;
}
.toolbar input{
  width:171px;
  margin:0 1px;
  border:2px solid;
  border-color:#8a8a68 #d0cfa4 #d0cfa4 #8a8a68;
}
.msg{
  padding-left:4px;
}
.statusline{
  height:30px;
  padding:3px 862px 0 0;
  background:#b2fffe;
  border-top:3px solid #667;
  border-bottom:5px solid #c4ccc8;
  box-shadow:inset 0 -2px #5a9c98;
  font:bold 12px/18px "Liberation Mono",monospace;
  text-align:right;
}

/* taskbar */
.taskbar{
  display:flex;
  align-items:flex-start;
  height:27px;
  padding:3px 2px 0 0;
  background:#d4d0c8;
  border-top:1px solid #777;
  box-shadow:inset 0 1px #fff;
  font-family:Roboto,"Noto Sans CJK SC",sans-serif;
}
.start,.tasks button{
  display:flex;
  align-items:center;
  gap:2px;
  height:28px;
  background:#d4d0c8;
  border:1px solid;
  border-color:#fff #404040 #404040 #fff;
  white-space:nowrap;
}
.start{
  width:46px;
  border-right-width:2px;
}
.quick{
  display:flex;
  gap:18px;
  width:80px;
  margin-left:57px;
  padding:4px 0 0 18px;
  border-left:2px solid #999;
}
.tasks{
  flex:1;
  display:flex;
  gap:3px;
}
.tasks button{
  flex:1;
  min-width:0;
  gap:3px;
  padding-left:3px;
}
.kbd{
  margin:6px 4px 0 22px;
}
.tray{
  display:flex;
  align-items:center;
  gap:9px;
  width:194px;
  height:28px;
  padding-left:6px;
  border:1px solid;
  border-color:#808080 #fff #fff #808080;
}
.time{
  margin:8px 0 0 18px;
}
.badge{
  position:absolute;
  top:-28px;
  right:270px;
  width:46px;
  height:46px;
  padding-top:25px;
  border:2px solid #e4f4e4;
  border-radius:23px;
  background:#3fc45c;
  box-shadow:0 1px 4px #666;
  color:#fff;
  font:bold 11px/16px "DejaVu Sans",sans-serif;
  text-align:center;
}

/* spreadsheet window */
.excel{
  position:absolute;
  left:737px;
  right:0;
  top:66px;
  bottom:22px;
  display:flex;
  flex-direction:column;
  padding:0 4px 0 3px;
  border:1px solid #4a6a9c;
  border-radius:7px 7px 3px 3px;
  background:#bfdbff;
  color:#15428b;
}
.office{
  position:absolute;
  left:4px;
  top:5px;
}
.xtitle{
  display:flex;
  align-items:center;
  height:28px;
  margin:0 -4px 0 -3px;
  padding:0 7px 0 46px;
  border-radius:6px 6px 0 0;
  background:linear-gradient(#e8f1fd,#d2e3f8 40%,#dfecfb);
  border-bottom:1px solid #b4cdf0;
}
.qat{
  display:flex;
  align-items:center;
  gap:6px;
  width:99px;
  height:21px;
  padding-left:8px;
  border:1px solid #9db7dc;
  border-left:0;
  border-radius:0 11px 11px 0;
  background:#dde9f9;
}
.more{
  margin-left:7px;
}
.dd{
  display:flex;
  align-items:center;
}
.dd::after,.big i,.namebox i{
  content:"";
  flex:none;
  display:inline-block;
  margin:0 4px;
  border:solid transparent;
  border-width:3px 3px 0;
  border-top-color:#4f75ae;
}
.off::after{
  border-top-color:#a9bdd8;
}
.xcaption{
  flex:1;
  padding-right:96px;
  text-align:center;
  font:13px/18px "Noto Sans","Noto Sans CJK SC",sans-serif;
  color:#3e6aaa;
  white-space:nowrap;
}
.xcaption span{
  color:#69727f;
}
.xbtns{
  display:flex;
  gap:8px;
}
.xtabs{
  display:flex;
  height:27px;
  padding-left:46px;
  font-size:12px;
  line-height:28px;
}
.xtabs a{
  padding:0 15px 0 14px;
}
.xtabs a:first-child{
  padding:0 12px 0 11px;
}
.xtabs .cur{
  margin:2px 3px 0 0;
  line-height:24px;
  border:1px solid #a3c0e8;
  border-bottom:0;
  border-radius:3px 3px 0 0;
  background:#e6f0fc;
}
.xtabs .xbtns{
  margin-left:auto;
  gap:10px;
  align-items:center;
  padding-right:3px;
}
.ribbon{
  display:flex;
  gap:4px;
  height:107px;
  padding:3px 2px;
  border:1px solid #8db2e3;
  border-radius:3px;
  background:linear-gradient(#dbe6f4,#c9d9ed 20%,#d9e6f6 70%,#e6f5ff);
  box-shadow:0 2px 2px #a8c4ea;
}
.rgroup{
  display:flex;
  flex-direction:column;
  flex:none;
  height:100px;
  border:1px solid #a9c1de;
  border-radius:3px;
  background:linear-gradient(#dde8f5,#cbdaee 25%,#d9e6f6);
}
.clip{width:71px}
.font{width:233px}
.align{width:111px}
.number{width:87px}
.styles{width:115px}
.cells{width:67px}
.edit{width:123px}
.rbody{
  flex:1;
  min-height:0;
  display:flex;
  padding:3px;
}
.stack{
  flex-direction:column;
  align-items:flex-start;
  gap:3px;
}
.font .stack{
  padding-top:10px;
  gap:10px;
}
.rname{
  position:relative;
  height:19px;
  background:#c1d8f1;
  color:#3e6aaa;
  text-align:center;
  line-height:19px;
}
.rname svg{
  position:absolute;
  right:5px;
  top:3px;
}
.clip .rname{
  padding-right:18px;
}
.line{
  display:flex;
  gap:4px;
}
.pair{
  display:flex;
}
.bset{
  display:flex;
  height:22px;
  border:1px solid #9db7dc;
  border-radius:2px;
  background:linear-gradient(#dce7f5,#c8d8ec 50%,#d4e2f4);
}
.bset button{
  display:flex;
  align-items:center;
  justify-content:center;
  min-width:22px;
}
.bset button+button{
  border-left:1px solid #b4cae6;
}
.bset .on{
  background:linear-gradient(#fcd9a0,#fdb554 50%,#fdd88c);
}
.bset .dd{
  padding-left:4px;
}
.bset .dd::after{
  margin:0 4px 0 3px;
}
.serif{
  font:bold 16px/18px "Liberation Serif",serif;
  color:#222;
}
.it{font-style:italic}
.small{font-size:13px}
.up::after,.dn::after{
  content:"";
  margin-bottom:9px;
  border:solid transparent;
  border-width:0 3px 3px;
  border-bottom-color:#2c58a8;
}
.dn::after{
  border-width:3px 3px 0;
  border-top-color:#2c58a8;
}
.bset .serif.dd{
  padding-left:6px;
}
.acolor{
  font:bold 16px/14px "Liberation Serif",serif;
}
.acolor span{
  width:16px;
  height:17px;
  border-bottom:4px solid #e81010;
}
.wen span{
  font-size:13px;
  line-height:12px;
}
.wen small{
  display:block;
  font:bold 8px/7px "Liberation Sans",sans-serif;
  color:#000;
}
/* small down arrow, built from three rows */
select{
  background:linear-gradient(#4f75ae,#4f75ae) no-repeat right 5px top 11px/5px 1px,
    linear-gradient(#4f75ae,#4f75ae) no-repeat right 6px top 12px/3px 1px,
    linear-gradient(#4f75ae,#4f75ae) no-repeat right 7px top 13px/1px 1px,
    #eaf2fb;
  border:1px solid #b5cbe8;
  color:#000;
}
.fname{
  width:131px;
  height:25px;
  padding-left:2px;
}
.fsize{
  width:46px;
  height:25px;
  padding-left:3px;
}
.nfmt{
  width:80px;
  height:25px;
  padding-left:2px;
}
.pct{
  width:24px;
  color:#222;
}
.bset.dec button{
  display:block;
  font:bold 8px/9px "Liberation Sans",sans-serif;
  text-align:right;
  padding-right:3px;
  color:#222;
}
.dec span{
  color:#2c58c0;
}
.clip .col{
  display:flex;
  flex-direction:column;
  gap:7px;
  padding:1px 0 0 4px;
}
.big{
  display:flex;
  flex-direction:column;
  align-items:center;
  width:40px;
  line-height:17px;
}
.big i{
  margin:8px 0 0;
}
.big span i{
  margin:0 0 2px 4px;
}
.paste span{
  margin-top:3px;
}
.list{
  display:flex;
  flex-direction:column;
  gap:6px;
  padding:2px 5px;
}
.list button{
  height:16px;
  gap:3px;
  white-space:nowrap;
}
.list .dd::after{
  margin:0 2px;
}
.edit .rbody{
  padding:1px 0;
}
.edit .list{
  padding:2px 0 2px 6px;
}
.edit .big{
  width:42px;
  padding-top:2px;
  white-space:nowrap;
}
.edit .big span{
  margin-top:5px;
}
.sigma{
  font:bold 15px/16px "Liberation Serif",serif;
  color:#000;
}
.security{
  display:flex;
  gap:6px;
  padding:5px 3px 5px 1px;
}
.secbox{
  flex:1;
  display:flex;
  align-items:center;
  gap:11px;
  height:33px;
  padding-left:3px;
  border:1px solid #a3bfe4;
  background:linear-gradient(#fff,#e6f1fd);
}
.secbox button{
  width:70px;
  height:21px;
  border:1px solid #a3bfe4;
  background:#fff;
}
.secx{
  align-self:flex-start;
  margin-top:4px;
}
.fbar{
  display:flex;
  height:20px;
  margin-bottom:4px;
  background:#fff;
  border:1px solid #6b8fc0;
  color:#000;
}
.namebox{
  display:flex;
  align-items:center;
  width:156px;
}
.namebox input{
  flex:1;
  min-width:0;
  padding-left:0;
  font:16px/18px "Liberation Serif",serif;
  text-align:center;
}
.namebox i{
  border-width:4px 4px 0;
  border-top-color:#000;
}
.fx{
  width:77px;
  padding-right:6px;
  border-right:1px solid #6b8fc0;
  border-radius:9px 0 0 9px;
  background:radial-gradient(circle at 9px 9px,#a9b8cc 3px,#eaf2fc 5px,transparent 6px),linear-gradient(#eaf2fc,#b4cbea);
  font:bold 16px/16px "Liberation Serif",serif;
  text-align:right;
  color:#444;
}
.fx small{
  font-style:italic;
  font-size:11px;
}
.formula{
  flex:1;
  min-width:0;
}
.fbar button{
  width:15px;
  padding-left:3px;
  border-left:1px solid #6b8fc0;
  background:#dce8f7;
}
.book{
  flex:1;
  min-height:0;
  display:flex;
}
.sheet{
  position:relative;
  flex:1;
  min-width:0;
  overflow:hidden;
  background:#fff;
  color:#000;
}
.sheet table{
  width:100%;
  table-layout:fixed;
  border-spacing:0;
  font:bold 14px/16px "Liberation Serif","Noto Sans CJK SC",serif;
}
.c0{width:33px}
.ca{width:109px}
.cb{width:37px}
.cc{width:111px}
.cd{width:61px}
.ce{width:81px}
.cf{width:72px}
.cg{width:49px}
.ch{width:89px}
.sheet th{
  padding:0;
  background:#e4ecf7;
  border:solid #9eb6ce;
  border-width:0 1px 1px 0;
  font-size:16px;
  font-weight:normal;
  color:#333f50;
}
.sheet thead th{
  height:19px;
  background:linear-gradient(#f6f9fd,#d5deea);
}
.sheet thead .hot{
  background:linear-gradient(#f9d99f,#f1c15f);
  border-color:#e08a3c;
}
.sheet thead .corner{
  background:linear-gradient(135deg,#a9c4e9 70%,#e8f0fa 71%);
}
.sheet tbody th{
  height:30px;
  vertical-align:bottom;
}
.sheet tbody .hot{
  background:#ffd58d;
  border-bottom-color:#e08a3c;
}
.sheet td{
  position:relative;
  padding:0 2px;
  border:solid #000;
  border-width:0 1px 1px 0;
  white-space:nowrap;
}
.sheet td:last-child{
  border-right:0;
}
.sheet td.n{
  padding:1px 0 0;
  font-size:18px;
  text-align:center;
}
.sheet td.cat{
  padding:0;
  font-size:17px;
  line-height:19px;
  text-align:center;
}
.sheet td.top{
  padding-top:6px;
  vertical-align:top;
}
.sheet td.big17{
  font-size:17px;
}
.sheet .y{
  background:#ff0;
}
.sheet .red{
  color:#dc1010;
}
.note::after,.flag::after{
  content:"";
  position:absolute;
  top:0;
  right:0;
  border:3px solid;
  border-color:#d01010 #d01010 transparent transparent;
}
.flag::after{
  right:auto;
  left:0;
  border-color:#087a18 transparent transparent #087a18;
}
.picked::after{
  content:"";
  position:absolute;
  left:-2px;
  right:-4px;
  top:-2px;
  bottom:-2px;
  z-index:1;
  border:3px double #000;
  background:#fff;
}
.sheet .opts{
  padding:0 0 0 2px;
  font-size:16px;
  font-weight:normal;
}
.opts div{
  display:grid;
  grid-template-columns:109px 98px 110px 101px 92px 1fr;
  align-items:center;
  overflow:hidden;
}
.opts span{
  font-size:17px;
}
.opts label{
  display:flex;
  align-items:center;
  gap:6px;
}
.opts .lg{
  font-size:19px;
}
.opts input{
  flex:none;
  width:12px;
  height:12px;
  border:1px solid;
  border-color:#666 #ddd #ddd #666;
}
.opts input:checked::before{
  content:"";
  display:block;
  width:8px;
  height:8px;
  margin:1px;
  background:#000;
  clip-path:polygon(0 30%,38% 62%,100% 0,100% 38%,38% 100%,0 68%);
}
.markbox{
  position:absolute;
  left:121px;
  top:43px;
  width:248px;
  height:62px;
  z-index:2;
  border:2px solid #28e428;
  box-shadow:2px 2px 4px rgba(0,0,0,.5),inset 2px 2px 4px rgba(0,0,0,.3);
}
.xvbar{
  display:flex;
  flex-direction:column;
  width:15px;
  background:#7797c4;
}
.xvbar b{
  height:5px;
  background:#e6effb;
  border:1px solid #7797c4;
}
.xvbar i,.hbar i{
  align-self:center;
  border:solid transparent;
  border-width:5px 4px 0;
  border-top-color:#2f4c7c;
  margin:5px 0;
}
.xvbar .north{
  border-width:0 4px 5px;
  border-bottom-color:#2f4c7c;
}
.xvbar div{
  width:12px;
  height:104px;
  margin:55px auto auto;
  border:1px solid #506c98;
  background:repeating-linear-gradient(#7a92b8 0 1px,#dbe5f2 1px 3px) no-repeat center/6px 8px,linear-gradient(90deg,#eef4fc,#b9cbe4);
}
.tabsrow{
  display:flex;
  height:16px;
  background:#c9ddf8;
  border-bottom:1px solid #7797c4;
}
.nav{
  display:flex;
  align-items:center;
  gap:6px;
  width:58px;
  padding-left:4px;
  border-right:1px solid #8fb0de;
}
.stabs{
  flex:1;
  min-width:0;
  display:flex;
  overflow:hidden;
  font:14px/15px "Liberation Serif","Noto Sans CJK SC",serif;
  white-space:nowrap;
  background:linear-gradient(#b4cef2,#e4effc);
}
.stabs a{
  padding:0 4px 0 11px;
  border-top:1px solid #7797c4;
  background:linear-gradient(120deg,transparent 6px,#6f92c8 6px,#6f92c8 7px,transparent 7px);
}
.stabs .cur{
  padding:0 8px 0 9px;
  background:#fff;
  border-top-color:#fff;
}
.stabs a:last-child{
  padding-right:0;
}
.hbar{
  display:flex;
  align-items:center;
  width:335px;
  padding-left:3px;
  background:#7797c4;
}
.hbar .l{
  border-width:4px 5px 4px 0;
  border-color:transparent #2f4c7c;
}
.hbar .r{
  margin:0 24px 0 auto;
  border-width:4px 0 4px 5px;
  border-color:transparent #2f4c7c;
}
.hbar div{
  width:155px;
  height:13px;
  margin-left:3px;
  border:1px solid #506c98;
  background:repeating-linear-gradient(90deg,#7a92b8 0 1px,#dbe5f2 1px 2px) no-repeat center/8px 7px,linear-gradient(#eef4fc,#b9cbe4);
}
.xstatus{
  display:flex;
  align-items:center;
  height:20px;
  padding-left:6px;
  background:linear-gradient(#d6e5f9,#b7cff0 50%,#cfe1f8);
}
.views{
  display:flex;
  align-items:center;
  margin-left:auto;
  padding-left:6px;
  border-left:1px solid #7797c4;
}
.views button{
  padding:2px;
  border:1px solid #8aa8d4;
}
.views .on{
  background:#fdd088;
}
.zoom{
  width:49px;
  text-align:center;
}
.xstatus input{
  width:102px;
  height:14px;
  background:linear-gradient(#55719c,#55719c) no-repeat center/100% 1px;
}
.xstatus input::-webkit-slider-thumb{
  appearance:none;
  width:9px;
  height:12px;
  background:#e8effa;
  border:1px solid #55719c;
  border-radius:0 0 4px 4px;
}
.grip{
  margin-left:7px;
}
```
